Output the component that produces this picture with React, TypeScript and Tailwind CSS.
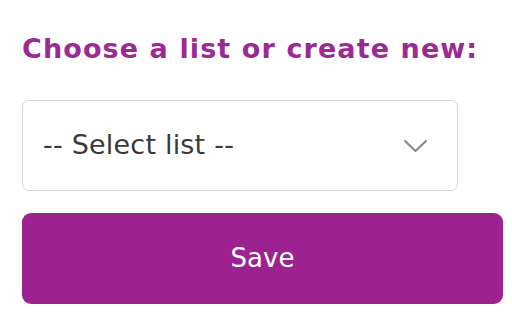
import React from 'react';

const App: React.FC = () => {
  return (
    <div
      className="w-[512px] h-[320px] bg-white px-[22px] pt-[31px] flex flex-col"
      style={{ fontFamily: '"DejaVu Sans", "Noto Sans", sans-serif' }}
    >
      <h2 className="text-[27px] leading-[36px] font-bold text-[#9b2a92] tracking-[1.1px]">
        Choose a list or create new:
      </h2>

      {/* List picker */}
      <div className="mt-[33px] w-[436px] h-[91px] border border-[#d4d4d4] rounded-[7px] flex items-center justify-between pl-[20px] pr-[29px]">
        <span className="text-[27px] text-[#3a3a3a] tracking-[0.2px]">-- Select list --</span>
        <svg width="25" height="14" viewBox="0 0 25 14" fill="none">
          <path d="M2 2 L12.5 12 L23 2" stroke="#8a8a8a" strokeWidth="2.2" strokeLinecap="round" strokeLinejoin="round" />
        </svg>
      </div>

      <button className="mt-[22px] w-[481px] h-[91px] rounded-[9px] bg-[#9c2290] text-white text-[26px] flex items-center justify-center">
        Save
      </button>
    </div>
  );
};

export default App;
